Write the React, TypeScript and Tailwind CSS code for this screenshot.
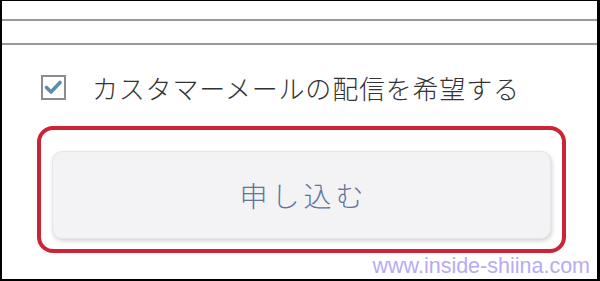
import React from "react";

export default function App() {
  return (
    <div className="w-[600px] h-[281px] bg-white border-l-2 border-r-[3px] border-t border-b-2 border-black flex flex-col overflow-hidden" style={{ fontFamily: '"Noto Sans CJK JP", "Noto Sans", sans-serif' }}>
      <div className="h-[18px]" />
      <div className="h-[2px] bg-[#9a9a9a] shadow-[0_0_1px_#cfcfcf]" />
      <div className="h-[22px]" />
      <div className="h-[2px] bg-[#9a9a9a] shadow-[0_0_1px_#cfcfcf]" />
      <div className="flex items-center pl-[39px] mt-[30px] h-[25px]">
        <div className="w-[25px] h-[25px] border-2 border-[#8c8c8c] bg-white flex items-center justify-center shrink-0">
          <svg width="21" height="21" viewBox="0 0 21 21">
            <path d="M3.5 10.5 L8 15 L17 5.5" fill="none" stroke="#5b8ea8" strokeWidth="3.6" strokeLinecap="round" strokeLinejoin="round" />
          </svg>
        </div>
        <span className="ml-[26px] text-[26px] font-light leading-none tracking-[0.8px] text-[#333333] whitespace-nowrap">カスタマーメールの配信を希望する</span>
      </div>
      <div className="ml-[35px] mt-[26px] w-[529px] h-[127px] border-4 border-[#cc2434] rounded-[16px] pt-[21px] px-[11px] shrink-0">
        <div className="w-[499px] h-[88px] bg-[#f3f3f6] rounded-[10px] border border-[#e6e6ea] shadow-[1px_2px_4px_rgba(0,0,0,0.18)] flex items-center justify-center">
          <span className="text-[28px] font-light leading-none tracking-[4px] pl-[4px] text-[#62739c]">申し込む</span>
        </div>
      </div>
      <div className="flex justify-end pr-[7px] mt-[1px]">
        <span className="text-[21.5px] leading-[24px] text-[#b8aaf4]" style={{ fontFamily: '"Liberation Sans", Arial, sans-serif' }}>www.inside-shiina.com</span>
      </div>
    </div>
  );
}
